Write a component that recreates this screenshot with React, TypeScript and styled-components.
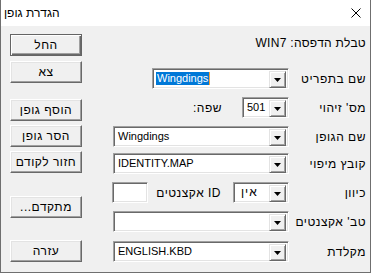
import React from "react";
import styled, { createGlobalStyle } from "styled-components";

const GlobalStyle = createGlobalStyle`
  html, body { margin: 0; padding: 0; background: #ffffff; }
  body { font-family: "Liberation Sans", "DejaVu Sans", Arial, sans-serif; }
  * { box-sizing: border-box; }
`;

const Window = styled.div`
  width: 371px;
  height: 273px;
  border: 1px solid #6f6f6f;
  border-top: 0;
  background: #f0f0f0;
  display: flex;
  flex-direction: column;
  overflow: hidden;
`;

const TitleBar = styled.div`
  height: 26px;
  flex: none;
  background: #ffffff;
  display: flex;
  align-items: center;
  justify-content: space-between;
  padding: 0 9px 0 3px;
`;

const Title = styled.span`
  direction: rtl;
  font-size: 12px;
  color: #000;
`;

const CloseIcon = () => (
  <svg width="10" height="10" viewBox="0 0 10 10">
    <path d="M0.5 0.5 L9.5 9.5 M9.5 0.5 L0.5 9.5" stroke="#000" strokeWidth="1" />
  </svg>
);

const Body = styled.div`
  flex: 1;
  display: flex;
  direction: rtl;
  padding: 0 4px 0 0;
  font-size: 11px;
  color: #000;
`;

const Form = styled.div`
  display: flex;
  flex-direction: column;
  padding-top: 10px;
`;

const Header = styled.div`
  height: 14px;
  line-height: 14px;
  white-space: nowrap;
  font-size: 12px;
  letter-spacing: 0.3px;
`;

const Row = styled.div<{ $gap: number }>`
  display: flex;
  align-items: center;
  height: 21px;
  margin-top: ${(p) => p.$gap}px;
`;

const Label = styled.span<{ $width?: number }>`
  width: ${(p) => (p.$width ? `${p.$width}px` : "auto")};
  flex: none;
  white-space: nowrap;
  font-size: 12px;
  letter-spacing: 0.5px;
`;

const Sunken = styled.div<{ $width: number }>`
  width: ${(p) => p.$width}px;
  height: 21px;
  flex: none;
  direction: ltr;
  display: flex;
  background: #ffffff;
  border: 1px solid;
  border-color: #a0a0a0 #ffffff #ffffff #a0a0a0;
  box-shadow: inset 1px 1px 0 #696969, inset -1px -1px 0 #e3e3e3;
  padding: 2px;
`;

const ComboText = styled.div<{ $selected?: boolean; $rtl?: boolean }>`
  flex: 1;
  display: flex;
  align-items: center;
  font-size: 11px;
  padding: 0 0 0 ${(p) => (p.$rtl ? "4px" : "1px")};
  & > span {
    background: ${(p) => (p.$selected ? "#0078d7" : "transparent")};
    color: ${(p) => (p.$selected ? "#ffffff" : "#000000")};
    border-right: ${(p) => (p.$selected ? "1px solid #f7a440" : "none")};
    line-height: 13px;
    padding: 0 1px;
    font-size: ${(p) => (p.$rtl ? "12px" : "11px")};
    letter-spacing: ${(p) => (p.$rtl ? "1px" : "0")};
  }
`;

const DropButton = styled.div`
  width: 17px;
  height: 17px;
  flex: none;
  background: #f0f0f0;
  border: 1px solid;
  border-color: #e3e3e3 #696969 #696969 #e3e3e3;
  box-shadow: inset 1px 1px 0 #ffffff, inset -1px -1px 0 #a0a0a0;
  display: flex;
  align-items: center;
  justify-content: center;
`;

const Arrow = () => (
  <svg width="7" height="4" viewBox="0 0 7 4">
    <path d="M0 0 H7 L3.5 4 Z" fill="#000" />
  </svg>
);

const Combo = ({
  width,
  text,
  selected,
  rtl,
}: {
  width: number;
  text: string;
  selected?: boolean;
  rtl?: boolean;
}) => (
  <Sunken $width={width}>
    <ComboText $selected={selected} $rtl={rtl}>
      <span dir={rtl ? "rtl" : "ltr"}>{text}</span>
    </ComboText>
    <DropButton>
      <Arrow />
    </DropButton>
  </Sunken>
);

const Spacer = styled.div<{ $w: number }>`
  width: ${(p) => p.$w}px;
  flex: none;
`;

const Buttons = styled.div`
  margin-right: auto;
  display: flex;
  flex-direction: column;
  padding: 8px 0 0 9px;
`;

const Button = styled.div<{ $default?: boolean; $gap: number }>`
  width: 72px;
  height: 22px;
  margin-top: ${(p) => p.$gap}px;
  display: flex;
  align-items: center;
  justify-content: center;
  font-size: 12px;
  letter-spacing: 0.5px;
  background: #f0f0f0;
  border: 1px solid;
  border-color: ${(p) => (p.$default ? "#646464" : "#ffffff #696969 #696969 #ffffff")};
  box-shadow: ${(p) =>
    p.$default
      ? "inset 1px 1px 0 #ffffff, inset -1px -1px 0 #696969, inset -2px -2px 0 #a0a0a0"
      : "inset -1px -1px 0 #a0a0a0, inset 1px 1px 0 #e3e3e3"};
`;

export default function App() {
  return (
    <>
      <GlobalStyle />
      <Window>
        <TitleBar>
          <Title>הגדרת גופן</Title>
          <CloseIcon />
        </TitleBar>
        <Body>
          <Form>
            <Header>טבלת הדפסה: WIN7</Header>
            <Row $gap={18}>
              <Label $width={77}>שם בתפריט</Label>
              <Combo width={137} text="Wingdings" selected />
            </Row>
            <Row $gap={8}>
              <Label $width={77}>מס' זיהוי</Label>
              <Combo width={47} text="501" />
              <Spacer $w={20} />
              <Label>שפה:</Label>
            </Row>
            <Row $gap={8}>
              <Label $width={77}>שם הגופן</Label>
              <Combo width={176} text="Wingdings" />
            </Row>
            <Row $gap={6}>
              <Label $width={77}>קובץ מיפוי</Label>
              <Combo width={176} text="IDENTITY.MAP" />
            </Row>
            <Row $gap={8}>
              <Label $width={77}>כיוון</Label>
              <Combo width={56} text="אין" rtl />
              <Spacer $w={12} />
              <Label>ID אקצנטים</Label>
              <Spacer $w={8} />
              <Sunken $width={36} />
            </Row>
            <Row $gap={8}>
              <Label $width={77}>טב' אקצנטים</Label>
              <Combo width={176} text="" />
            </Row>
            <Row $gap={9}>
              <Label $width={77}>מקלדת</Label>
              <Combo width={176} text="ENGLISH.KBD" />
            </Row>
          </Form>
          <Buttons>
            <Button $default $gap={0}>החל</Button>
            <Button $gap={5}>צא</Button>
            <Button $gap={16}>הוסף גופן</Button>
            <Button $gap={4}>הסר גופן</Button>
            <Button $gap={4}>חזור לקודם</Button>
            <Button $gap={23}>מתקדם...</Button>
            <Button $gap={22}>עזרה</Button>
          </Buttons>
        </Body>
      </Window>
    </>
  );
}
